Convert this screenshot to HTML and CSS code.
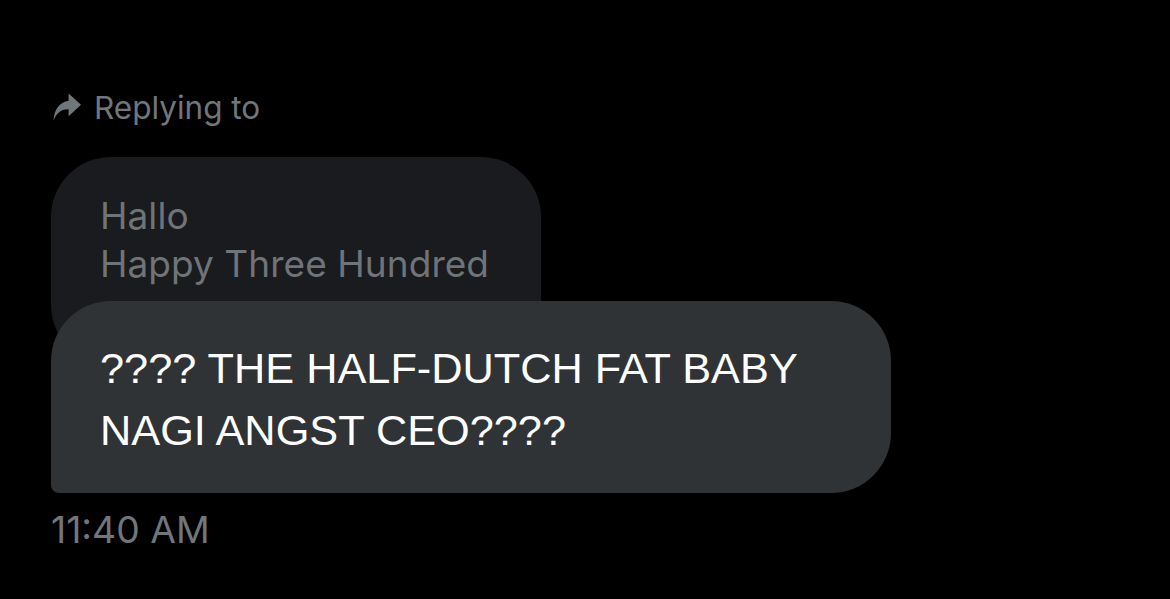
FILE: index.html
```html
<!DOCTYPE html>
<html>
<head>
<meta charset="utf-8">
<link rel="stylesheet" href="styles.css">
</head>
<body>
<div class="thread">
  <div class="replying">
    <svg class="reply-icon" viewBox="0 0 26 26" aria-hidden="true">
      <path d="M14.5 0.5 L26 11 L14.5 21.5 L14.5 15.2 C8.5 15 4 17.5 0.5 25.5 C1 15.5 6 8.5 14.5 7.2 Z" fill="#71767b"/>
    </svg>
    <span class="replying-text">Replying to</span>
  </div>
  <div class="quoted">
    <div class="quoted-text">Hallo<br>Happy Three Hundred</div>
  </div>
  <div class="message">
    <div class="message-text">???? THE HALF-DUTCH FAT BABY<br>NAGI ANGST CEO????</div>
  </div>
  <div class="time">11:40 AM</div>
</div>
</body>
</html>
```

FILE: styles.css
```css
html, body {
  margin: 0;
  padding: 0;
  background: #000;
}
body {
  width: 1170px;
  height: 599px;
  overflow: hidden;
}
.thread {
  padding: 90px 0 0 51px;
  display: flex;
  flex-direction: column;
  align-items: flex-start;
  font-family: Inter, "Liberation Sans", sans-serif;
}
.replying {
  display: flex;
  align-items: center;
  gap: 13px;
  height: 36px;
  padding-left: 2px;
}
.reply-icon {
  width: 28px;
  height: 28px;
  margin-top: -3px;
}
.replying-text {
  color: #71767b;
  font-size: 31.5px;
  line-height: 36px;
}
.quoted {
  margin-top: 31px;
  width: 490px;
  height: 208px;
  box-sizing: border-box;
  background: #1a1b1e;
  border-radius: 60px;
  padding: 35px 0 0 49px;
}
.quoted-text {
  color: #6f7479;
  font-size: 37px;
  line-height: 48px;
  letter-spacing: 0.05px;
}
.message {
  position: relative;
  margin-top: -64px;
  width: 840px;
  height: 192px;
  box-sizing: border-box;
  background: #2f3336;
  border-radius: 60px 60px 60px 8px;
  padding: 36px 0 0 49px;
}
.message-text {
  color: #ffffff;
  font-family: "Liberation Sans", Arial, sans-serif;
  font-size: 43.3px;
  line-height: 62px;
}
.time {
  margin-top: 15px;
  color: #71767b;
  font-size: 37.3px;
  line-height: 44px;
}
```
